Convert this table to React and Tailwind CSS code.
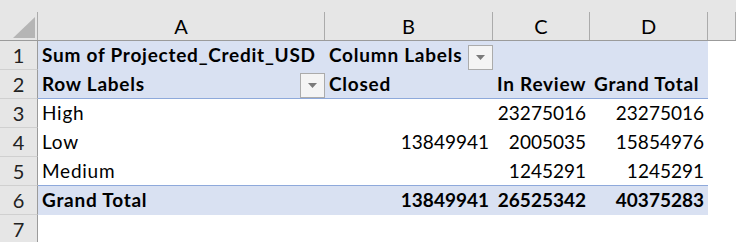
import React from 'react'

const font = { fontFamily: 'Lato, "Open Sans", sans-serif' }

const colWidths = ['w-[287px]', 'w-[168px]', 'w-[97px]', 'w-[118px]']
const letters = ['A', 'B', 'C', 'D']

// pivot rows: [label, closed, inReview, total, kind]
const rows = [
  ['Sum of Projected_Credit_USD', 'Column Labels', '', '', 'head1'],
  ['Row Labels', 'Closed', 'In Review', 'Grand Total', 'head2'],
  ['High', '', '23275016', '23275016', 'body'],
  ['Low', '13849941', '2005035', '15854976', 'body'],
  ['Medium', '', '1245291', '1245291', 'last'],
  ['Grand Total', '13849941', '26525342', '40375283', 'total'],
  ['', '', '', '', 'empty'],
]

function FilterButton() {
  return (
    <div className="absolute right-0 bottom-0 w-[25px] h-[25px] bg-[#f4f4f4] border border-[#ababab] flex items-center justify-center">
      <svg width="9" height="5" viewBox="0 0 9 5">
        <polygon points="0,0 9,0 4.5,5" fill="#7a7a7a" />
      </svg>
    </div>
  )
}

function Row({ cells, kind, n }) {
  const shaded = kind === 'head1' || kind === 'head2' || kind === 'total'
  const bg = shaded ? 'bg-[#d9e1f2]' : 'bg-white'
  const bottom =
    kind === 'head2' || kind === 'last' ? 'border-b border-[#8ea9db]' : ''
  const bold = kind === 'head1' || kind === 'head2' || kind === 'total'
  return (
    <div className="flex h-[29px]">
      <div className="w-[38px] shrink-0 bg-[#e6e6e6] border-r border-b border-r-[#9b9b9b] border-b-[#d0d0d0] flex items-center justify-center text-[20px] text-[#222]">
        {n}
      </div>
      {cells.map((c, i) => {
        const numeric = /^\d+$/.test(c)
        const inPivot = kind !== 'empty'
        return (
          <div
            key={i}
            className={`relative shrink-0 ${colWidths[i]} ${inPivot ? bg : 'bg-white'} ${inPivot ? bottom : ''} flex items-center px-[4px] text-[19px] text-black whitespace-nowrap ${numeric ? 'justify-end' : 'tracking-[0.75px]'} ${bold ? 'font-bold' : ''}`}
          >
            {c}
            {kind === 'head1' && i === 1 && <FilterButton />}
            {kind === 'head2' && i === 0 && <FilterButton />}
          </div>
        )
      })}
      <div className="flex-1 bg-white" />
    </div>
  )
}

export default function App() {
  return (
    <div className="w-[736px] h-[242px] overflow-hidden bg-white" style={font}>
      <div className="h-[12px] bg-[#e6e6e6]" />
      <div className="flex h-[29px] bg-[#e6e6e6] border-b border-[#9b9b9b]">
        <div className="w-[38px] shrink-0 border-r border-[#ababab] relative">
          <svg className="absolute left-[13px] top-[5px]" width="22" height="21" viewBox="0 0 22 21">
            <polygon points="22,0 22,21 0,21" fill="#b5b5b5" />
          </svg>
        </div>
        {letters.map((l, i) => (
          <div
            key={l}
            className={`shrink-0 ${colWidths[i]} border-r border-[#ababab] flex items-center justify-center text-[20px] text-black`}
          >
            {l}
          </div>
        ))}
        <div className="w-[28px] shrink-0 border-r border-[#ababab]" />
      </div>
      {rows.map((r, idx) => (
        <Row key={idx} cells={r.slice(0, 4)} kind={r[4]} n={idx + 1} />
      ))}
    </div>
  )
}
